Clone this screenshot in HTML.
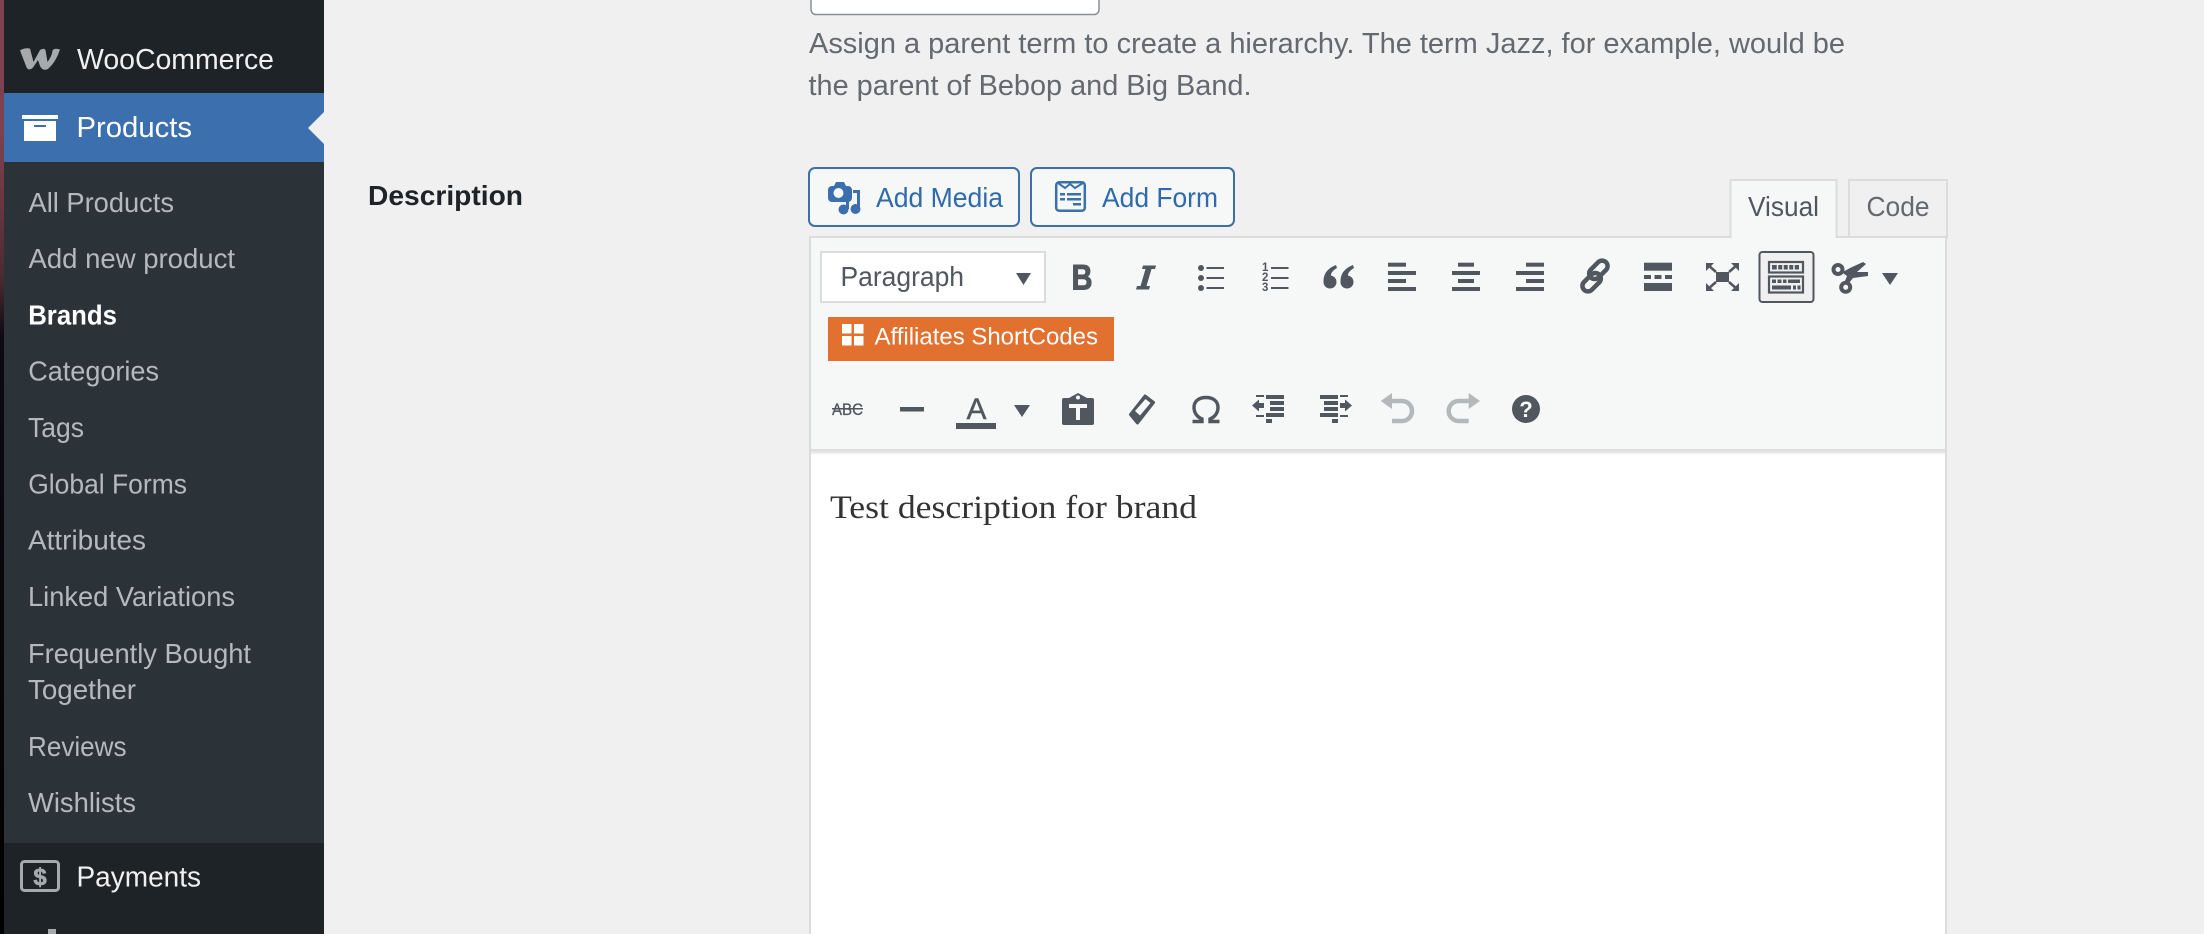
<!DOCTYPE html>
<html lang="en"><head><meta charset="utf-8"><title>Brands</title>
<style>
html,body{margin:0;padding:0;background:#f0f0f0;width:2204px;height:934px;overflow:hidden}
svg{display:block}
text{font-family:"Liberation Sans",Arial,sans-serif}
.m{font-size:29px;fill:#f0f0f1}
.s{font-size:28px;fill:#b4b9be}
.h{font-size:28.5px;fill:#646970}
.b{font-size:28px;fill:#2f6bac}
</style></head><body>
<svg width="2204" height="934" viewBox="0 0 2204 934" xmlns="http://www.w3.org/2000/svg">
<defs>
<linearGradient id="w" x1="0" y1="0" x2="0" y2="1"><stop offset="0" stop-color="#7f4150"/><stop offset=".14" stop-color="#7f4150"/><stop offset=".22" stop-color="#6a3640"/><stop offset=".3" stop-color="#4a2a30"/><stop offset=".36" stop-color="#0c0a12"/><stop offset="1" stop-color="#000"/></linearGradient>
<linearGradient id="sh" x1="0" y1="0" x2="0" y2="1"><stop offset="0" stop-color="#dcdcde"/><stop offset=".5" stop-color="#e4e4e5"/><stop offset="1" stop-color="#fff"/></linearGradient>
</defs>
<rect width="2204" height="934" fill="#f0f0f0"/>
<rect width="4" height="934" fill="url(#w)"/>

<!-- sidebar -->
<rect x="4" width="320" height="934" fill="#1d2327"/>
<rect x="4" y="93" width="320" height="69" fill="#3b6fae"/>
<rect x="4" y="162" width="320" height="681" fill="#2c3338"/>
<path d="M324 112L308 128L324 144Z" fill="#f0f0f0"/>

<path d="M20 50.500Q24 47.500 30 48.500L33.500 62L40 50Q44 47.500 45.500 50L47.500 62Q52 56 52.500 50.500Q54.500 47.500 60 49.500Q56 62 48 69Q42.500 71.500 40 66L38 60L33 67.500Q28 72 26 66Z" fill="#a7aaad"/>
<text class="m" x="77" y="69" textLength="197" lengthAdjust="spacingAndGlyphs">WooCommerce</text>

<rect x="22" y="115" width="36" height="4" fill="#fff"/>
<rect x="24" y="121" width="32" height="20" fill="#fff"/>
<rect x="34" y="125" width="12" height="2" fill="#3b6fae"/>
<text class="m" x="76.500" y="137" textLength="115.500" lengthAdjust="spacingAndGlyphs" style="fill:#fff">Products</text>

<text class="s" x="28.500" y="212" textLength="145.500" lengthAdjust="spacingAndGlyphs">All Products</text>
<text class="s" x="28.500" y="268" textLength="206.500" lengthAdjust="spacingAndGlyphs">Add new product</text>
<text class="s" x="28.200" y="324.500" textLength="88.800" lengthAdjust="spacingAndGlyphs" style="fill:#fff;font-weight:bold">Brands</text>
<text class="s" x="28.200" y="380.500" textLength="130.800" lengthAdjust="spacingAndGlyphs">Categories</text>
<text class="s" x="28" y="437" textLength="56" lengthAdjust="spacingAndGlyphs">Tags</text>
<text class="s" x="28.200" y="493.500" textLength="158.800" lengthAdjust="spacingAndGlyphs">Global Forms</text>
<text class="s" x="28" y="549.500" textLength="118" lengthAdjust="spacingAndGlyphs">Attributes</text>
<text class="s" x="28" y="606" textLength="207" lengthAdjust="spacingAndGlyphs">Linked Variations</text>
<text class="s" x="28" y="663" textLength="223" lengthAdjust="spacingAndGlyphs">Frequently Bought</text>
<text class="s" x="28" y="699" textLength="108" lengthAdjust="spacingAndGlyphs">Together</text>
<text class="s" x="28" y="756" textLength="98.500" lengthAdjust="spacingAndGlyphs">Reviews</text>
<text class="s" x="28" y="812" textLength="108" lengthAdjust="spacingAndGlyphs">Wishlists</text>

<rect x="21.500" y="861.500" width="37" height="29" rx="3" fill="none" stroke="#a7aaad" stroke-width="3"/>
<text x="40" y="885" text-anchor="middle" style="font-size:24px;font-weight:bold;fill:#a7aaad;stroke:#a7aaad;stroke-width:.6px">$</text>
<text class="m" x="76.500" y="886.500" textLength="124.500" lengthAdjust="spacingAndGlyphs">Payments</text>
<rect x="48" y="929" width="8" height="5" fill="#a7aaad"/>

<!-- form -->
<rect x="811" y="-10" width="288" height="24.500" rx="5" fill="#fff" stroke="#8c8f94" stroke-width="1.500"/>
<text class="h" x="809" y="53" textLength="1036" lengthAdjust="spacingAndGlyphs">Assign a parent term to create a hierarchy. The term Jazz, for example, would be</text>
<text class="h" x="808.500" y="95" textLength="443" lengthAdjust="spacingAndGlyphs">the parent of Bebop and Big Band.</text>
<text x="368" y="205" textLength="155" lengthAdjust="spacingAndGlyphs" style="font-size:28px;font-weight:bold;fill:#1d2327">Description</text>

<!-- buttons -->
<rect x="809" y="168" width="210" height="58" rx="6" fill="#f6f7f7" stroke="#3b6fae" stroke-width="2"/>
<rect x="1031" y="168" width="203" height="58" rx="6" fill="#f6f7f7" stroke="#3b6fae" stroke-width="2"/>
<!-- media icon -->
<path d="M828 190a4 4 0 0 1 4-4h2l2-4h8l2 4h2a4 4 0 0 1 4 4v8a4 4 0 0 1-4 4h-16a4 4 0 0 1-4-4z" fill="#3b6fae"/>
<circle cx="838.500" cy="193" r="5" fill="#f6f7f7"/>
<circle cx="843.500" cy="209.500" r="5" fill="#3b6fae"/>
<circle cx="855.500" cy="209" r="5" fill="#3b6fae"/>
<path d="M853 190h7v19h-3v-16h-4z" fill="#3b6fae"/>
<path d="M846 199h3v10h-3z" fill="#3b6fae"/>
<text class="b" x="876" y="207" textLength="127" lengthAdjust="spacingAndGlyphs">Add Media</text>
<!-- form icon -->
<rect x="1056.200" y="182.200" width="28.600" height="28.600" rx="3" fill="none" stroke="#3b6fae" stroke-width="2.500"/>
<path d="M1058 183l7 5 5-4 5 4 8-5" fill="none" stroke="#3b6fae" stroke-width="2"/>
<path d="M1060 193h5v2.500h-5zM1067 193h14v2.500h-14zM1060 198h5v2.500h-5zM1067 198h14v2.500h-14zM1073 203h8v2.500h-8z" fill="#3b6fae"/>
<text class="b" x="1102" y="207" textLength="116" lengthAdjust="spacingAndGlyphs">Add Form</text>

<!-- tabs -->
<rect x="1849" y="180" width="98" height="58" fill="#f0f0f0" stroke="#dcdcde" stroke-width="2"/>
<rect x="1730.500" y="180" width="106" height="60" fill="#f6f7f7" stroke="#dcdcde" stroke-width="2"/>

<!-- editor -->
<rect x="810" y="237" width="1136" height="720" fill="#fff" stroke="#dcdcde" stroke-width="2"/>
<rect x="811" y="238" width="1134" height="211" fill="#f6f7f7"/>
<rect x="811" y="449" width="1134" height="6" fill="url(#sh)"/>
<rect x="1731.500" y="234" width="104" height="6" fill="#f6f7f7"/>
<text x="1748" y="216" textLength="71" lengthAdjust="spacingAndGlyphs" style="font-size:28px;fill:#50575e">Visual</text>
<text x="1866.500" y="216" textLength="63" lengthAdjust="spacingAndGlyphs" style="font-size:28px;fill:#646970">Code</text>

<!-- select -->
<rect x="821" y="252" width="224" height="50" fill="#fff" stroke="#dcdcde" stroke-width="2"/>
<text x="840.500" y="286" textLength="123.500" lengthAdjust="spacingAndGlyphs" style="font-size:28px;fill:#50575e">Paragraph</text>
<path d="M1016 273h15l-7.500 12z" fill="#50575e"/>

<g fill="#50575e">
<!-- bold / italic -->
<text x="1071.500" y="289.500" textLength="21" lengthAdjust="spacingAndGlyphs" style="font-size:35px;font-weight:bold;fill:#50575e;stroke:#50575e;stroke-width:1px">B</text>
<path d="M1143 265.500h13l-1 3.500h-3.500l-5 17h3.500l-1 3.500h-13l1-3.500h3.500l5-17h-3.500z"/>
<!-- bullets -->
<circle cx="1201" cy="268" r="3"/><circle cx="1201" cy="278" r="3"/><circle cx="1201" cy="288" r="3"/>
<rect x="1206.500" y="267" width="17.500" height="2"/><rect x="1206.500" y="277" width="17.500" height="2"/><rect x="1206.500" y="287" width="17.500" height="2"/>
<!-- numbers -->
<rect x="1271" y="267" width="17.500" height="2"/><rect x="1271" y="277" width="17.500" height="2"/><rect x="1271" y="287" width="17.500" height="2"/>
<text x="1262" y="271" style="font-size:11.500px;font-weight:bold;fill:#50575e">1</text>
<text x="1262" y="281" style="font-size:11.500px;font-weight:bold;fill:#50575e">2</text>
<text x="1262" y="291" style="font-size:11.500px;font-weight:bold;fill:#50575e">3</text>
<!-- quote -->
<circle cx="1330" cy="282" r="6.500"/><path d="M1323.500 282Q1323 270 1336 265L1337 268Q1330 272 1331 277Z"/>
<circle cx="1347" cy="282" r="6.500"/><path d="M1340.500 282Q1340 270 1353 265L1354 268Q1347 272 1348 277Z"/>
<!-- align left -->
<rect x="1388" y="262.700" width="18" height="4"/><rect x="1388" y="271" width="28" height="4"/><rect x="1388" y="279" width="18" height="4"/><rect x="1388" y="287" width="28" height="4"/>
<!-- align center -->
<rect x="1458" y="262.700" width="16" height="4"/><rect x="1452" y="271" width="28" height="4"/><rect x="1458" y="279" width="16" height="4"/><rect x="1452" y="287" width="28" height="4"/>
<!-- align right -->
<rect x="1526" y="262.700" width="18" height="4"/><rect x="1516" y="271" width="28" height="4"/><rect x="1526" y="279" width="18" height="4"/><rect x="1516" y="287" width="28" height="4"/>
<!-- read more -->
<rect x="1644" y="262.700" width="28" height="8"/><rect x="1644" y="275" width="7" height="4"/><rect x="1654.500" y="275" width="7" height="4"/><rect x="1665" y="275" width="7" height="4"/><rect x="1644" y="283" width="28" height="8"/>
<!-- fullscreen -->
<rect x="1716" y="272" width="13" height="10"/>
<path d="M1706 263h8l-8 8zM1739 263h-8l8 8zM1706 291h8l-8-8zM1739 291h-8l8-8z"/>
<path d="M1708 265l8 7M1737 265l-8 7M1708 289l8-7M1737 289l-8-7" stroke="#50575e" stroke-width="2.500" fill="none"/>
</g>
<!-- link -->
<g transform="translate(1595 276) rotate(-45)" fill="none" stroke="#50575e" stroke-width="4.500">
<rect x="-17.500" y="-3.500" width="21.500" height="11" rx="5.500"/>
<rect x="-4" y="-7.500" width="21.500" height="11" rx="5.500"/>
</g>
<!-- kitchen sink -->
<rect x="1759.500" y="252" width="54" height="50" rx="3" fill="#f0f0f1" stroke="#50575e" stroke-width="2"/>
<rect x="1769" y="262" width="34" height="10.500" fill="none" stroke="#50575e" stroke-width="2.200"/>
<rect x="1769" y="276.500" width="34" height="16" fill="none" stroke="#50575e" stroke-width="2.200"/>
<path d="M1772 265h27v4.500h-27z" fill="#50575e"/>
<path d="M1777.500 265v4.500M1783 265v4.500M1788.500 265v4.500M1794 265v4.500" stroke="#f0f0f1" stroke-width="1.500"/>
<path d="M1772 279.500h4v3.500h-4zM1777.500 279.500h4v3.500h-4zM1783 279.500h3.500v3.500h-3.500zM1788 279.500h12v3.500h-12zM1772 285.500h19v4h-19zM1793 285.500h3v4h-3zM1797.500 285.500h3v4h-3z" fill="#50575e"/>
<!-- scissors -->
<circle cx="1838" cy="269.500" r="4.500" fill="none" stroke="#50575e" stroke-width="4"/>
<circle cx="1845.700" cy="287.300" r="4.500" fill="none" stroke="#50575e" stroke-width="4"/>
<path d="M1842 272.500L1850 268L1863 262L1866 264L1857 272L1868 272V276L1853 278L1849 283L1845 281L1847 276Z" fill="#50575e"/>
<path d="M1882 273h16l-8 12z" fill="#50575e"/>

<!-- orange button -->
<rect x="828" y="317" width="286" height="44" fill="#e2702f"/>
<path d="M842 324h9.500v9.500H842zM854 324h9.500v9.500H854zM842 336h9.500v9.500H842zM854 336h9.500v9.500H854z" fill="#fff"/>
<text x="874.500" y="344.500" textLength="223.500" lengthAdjust="spacingAndGlyphs" style="font-size:24px;fill:#fff">Affiliates ShortCodes</text>

<!-- row 3 -->
<text x="832" y="415" textLength="31" lengthAdjust="spacingAndGlyphs" style="font-size:17px;fill:#50575e;stroke:#50575e;stroke-width:.3px">ABC</text>
<rect x="832" y="408" width="31" height="1.500" fill="#50575e"/>
<rect x="900" y="407" width="24" height="4.500" fill="#50575e"/>
<text x="966.500" y="419" textLength="20" lengthAdjust="spacingAndGlyphs" style="font-size:30px;fill:#50575e;stroke:#50575e;stroke-width:.4px">A</text>
<rect x="956" y="423" width="40" height="6" fill="#50575e"/>
<path d="M1014 405h16l-8 12z" fill="#50575e"/>
<!-- paste -->
<rect x="1062" y="398" width="32" height="27" rx="2" fill="#50575e"/>
<path d="M1069 398l9-5 9 5v4h-18z" fill="#50575e"/>
<circle cx="1078" cy="397.500" r="2" fill="#f6f7f7"/>
<path d="M1069 404h18v4h-7v12h-4v-12h-7z" fill="#f6f7f7"/>
<!-- eraser -->
<path d="M1130.500 414.500L1145 396L1153.500 402.500L1137.500 423Z" fill="#50575e" stroke="#50575e" stroke-width="3" stroke-linejoin="round"/>
<path d="M1135 411L1145.500 399L1150.500 403L1140 415.500Z" fill="#f6f7f7"/>
<!-- omega -->
<path d="M1192.500 421.500h9.500v-2.500c-5-2-8-6.500-8-11.500c0-6.500 5-10 12-10s12 3.500 12 10c0 5-3 9.500-8 11.500v2.500h9.500" fill="none" stroke="#50575e" stroke-width="3.400"/>
<!-- outdent -->
<g fill="#50575e">
<path d="M1266 395h18v4h-18zM1270 401h14v4h-14zM1270 407h14v4h-14zM1266 413h18v4h-18zM1266 419h6v4h-6z"/>
<path d="M1256 395h8v2h-8zM1256 415h8v2h-8z"/>
<path d="M1252 405.500l7-6v3.500h5v5h-5v3.500z"/>
<!-- indent -->
<path d="M1320 395h18v4h-18zM1324 401h14v4h-14zM1324 407h14v4h-14zM1320 413h18v4h-18zM1332 419h6v4h-6z"/>
<path d="M1340 395h8v2h-8zM1340 415h8v2h-8z"/>
<path d="M1352 405.500l-7-6v3.500h-5v5h5v3.500z"/>
</g>
<!-- undo/redo -->
<g fill="#b5b8ba">
<path d="M1380.700 401l11.300-8v16z"/>
<path d="M1480 401l-11.300-8v16z"/>
</g>
<path d="M1390 401h12a10 10 0 0 1 0 20h-10" fill="none" stroke="#b5b8ba" stroke-width="4.500"/>
<path d="M1470.700 401h-12a10 10 0 0 0 0 20h10" fill="none" stroke="#b5b8ba" stroke-width="4.500"/>
<!-- help -->
<circle cx="1526" cy="409" r="14" fill="#50575e"/>
<text x="1526" y="417" text-anchor="middle" style="font-size:22px;font-weight:bold;fill:#fff">?</text>

<!-- content -->
<text x="830" y="518" textLength="367" lengthAdjust="spacingAndGlyphs" style="font-family:'Liberation Serif',Georgia,serif;font-size:33px;fill:#333">Test description for brand</text>
</svg>
</body></html>
